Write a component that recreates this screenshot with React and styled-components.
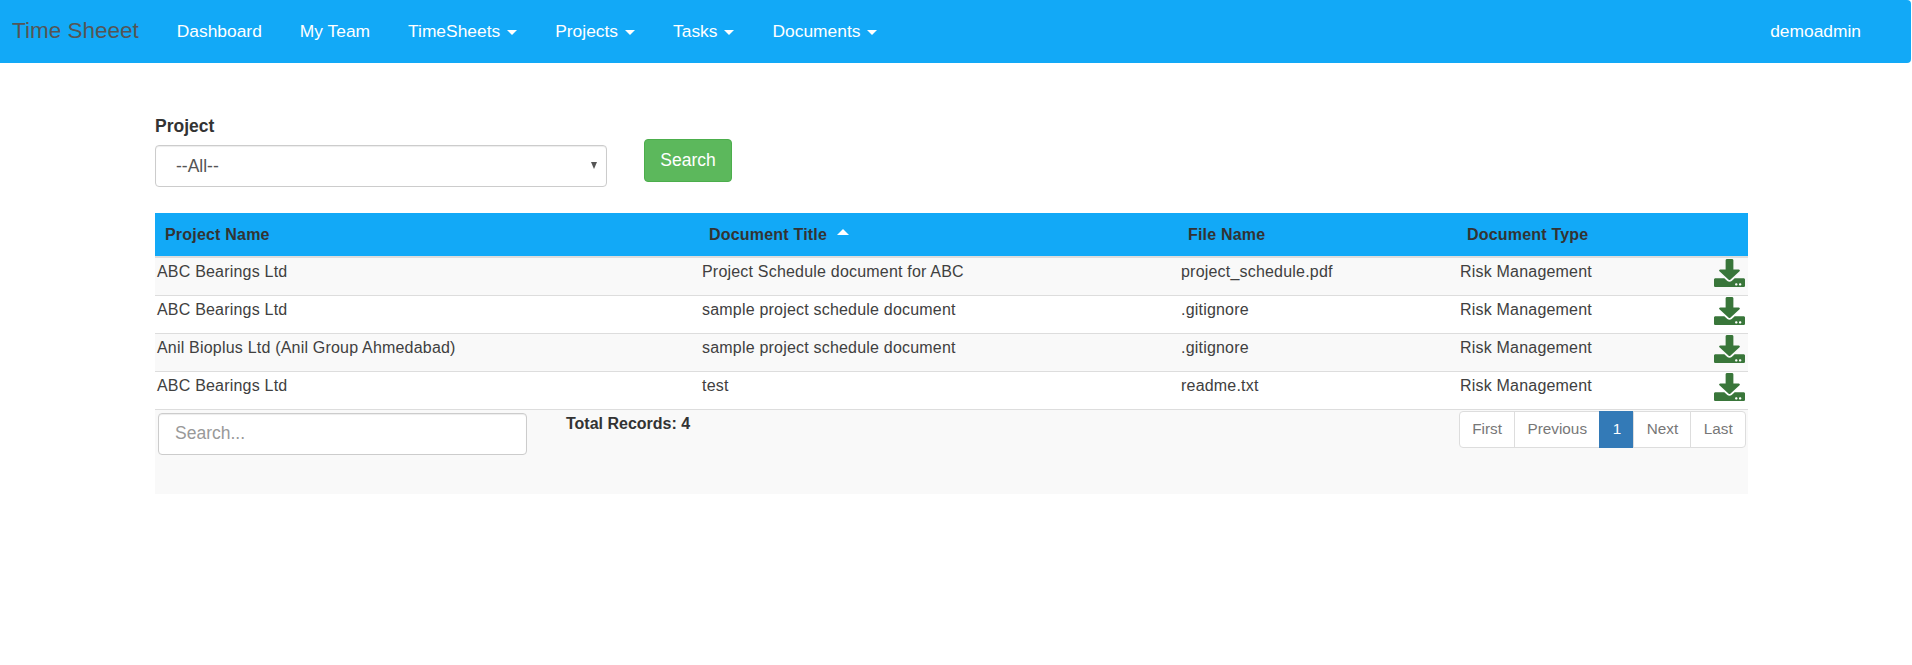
import React from 'react';
import styled, { createGlobalStyle } from 'styled-components';
import { FaDownload } from 'react-icons/fa';

const FONT = '"Liberation Sans", Arial, sans-serif';

/* ========== STYLES ========== */
const GlobalStyle = createGlobalStyle`
  * {
    box-sizing: border-box;
  }
  body {
    margin: 0;
    background: #fff;
    color: #333;
    font-family: ${FONT};
    font-size: 16px;
    line-height: 20px;
  }
`;

const Navbar = styled.nav`
  display: flex;
  align-items: center;
  height: 63px;
  margin-right: 1px;
  padding-bottom: 2px;
  background: #12a9f7;
  border-radius: 0 4px 4px 0;
`;

const Brand = styled.a`
  padding: 0 19px 0 12px;
  font-size: 22.5px;
  color: #555;
`;

const NavItem = styled.a`
  padding: 0 19px;
  font-size: 17.4px;
  color: #fff;
  display: flex;
  align-items: center;
`;

const Caret = styled.span`
  width: 0;
  height: 0;
  margin-left: 7px;
  margin-top: 3px;
  border-top: 5px solid #fff;
  border-left: 5px solid transparent;
  border-right: 5px solid transparent;
`;

const UserName = styled(NavItem)`
  margin-left: auto;
  padding: 0 50px 0 0;
`;

const Content = styled.main`
  padding: 52px 164px 0 155px;
`;

const FilterRow = styled.div`
  display: flex;
  align-items: flex-end;
  gap: 37px;
  margin-bottom: 26px;
`;

const Field = styled.div`
  width: 452px;
`;

const FieldLabel = styled.label`
  display: block;
  margin-bottom: 8px;
  font-size: 17.5px;
  font-weight: 700;
  line-height: 22px;
  color: #333;
`;

const SelectBox = styled.div`
  position: relative;
  height: 42px;
  padding: 0 20px;
  display: flex;
  align-items: center;
  background: #fff;
  border: 1px solid #ccc;
  border-radius: 4px;
  box-shadow: inset 0 1px 1px rgba(0, 0, 0, 0.075);
  font-size: 17.5px;
  color: #555;
`;

const SelectArrow = styled.span`
  position: absolute;
  right: 9px;
  top: 16px;
  width: 0;
  height: 0;
  border-top: 7px solid #555;
  border-left: 3px solid transparent;
  border-right: 3px solid transparent;
`;

const SearchButton = styled.button`
  height: 43px;
  width: 88px;
  margin-bottom: 5px;
  background: #5cb85c;
  border: 1px solid #4cae4c;
  border-radius: 4px;
  color: #fff;
  font-family: ${FONT};
  font-size: 17.5px;
`;

const Table = styled.table`
  width: 100%;
  table-layout: fixed;
  border-collapse: collapse;
`;

const HeadCell = styled.th`
  height: 44px;
  padding: 0 9px;
  background: #12a9f7;
  border-bottom: 2px solid #ddd;
  color: #333;
  font-size: 16px;
  letter-spacing: 0.2px;
  font-weight: 700;
  text-align: left;
  &:first-child {
    padding-left: 10px;
  }
`;

const SortMark = styled.span`
  display: inline-block;
  width: 0;
  height: 0;
  margin-left: 10px;
  vertical-align: 5px;
  border-bottom: 6px solid #fff;
  border-left: 6px solid transparent;
  border-right: 6px solid transparent;
`;

const Row = styled.tr`
  background: ${(props) => (props.$striped ? '#f9f9f9' : '#fff')};
`;

const Cell = styled.td`
  height: 38px;
  padding: 4px 2px 0;
  border-bottom: 1px solid #ddd;
  vertical-align: top;
  font-size: 16px;
  letter-spacing: 0.2px;
  line-height: 20px;
  color: #404040;
`;

const IconCell = styled(Cell)`
  padding: 1px 3px 0 0;
  text-align: right;
  color: #39763a;
  svg {
    display: inline-block;
    vertical-align: top;
  }
`;

const Footer = styled.div`
  display: flex;
  align-items: flex-start;
  height: 84px;
  padding: 3px 2px 0 3px;
  background: #f9f9f9;
`;

const SearchInput = styled.input`
  width: 369px;
  height: 42px;
  padding: 0 16px;
  background: #fff;
  border: 1px solid #ccc;
  border-radius: 4px;
  box-shadow: inset 0 1px 1px rgba(0, 0, 0, 0.075);
  font-family: ${FONT};
  font-size: 17.5px;
  color: #555;
  &::placeholder {
    color: #999;
  }
`;

const TotalRecords = styled.div`
  margin: 1px 0 0 39px;
  font-size: 16px;
  font-weight: 700;
  color: #333;
`;

const Pager = styled.div`
  display: flex;
  margin: -2px 0 0 auto;
`;

const PageLink = styled.a`
  height: 37px;
  padding: 0 12.3px;
  margin-left: -1px;
  display: flex;
  align-items: center;
  background: ${(props) => (props.$active ? '#337ab7' : '#fff')};
  border: 1px solid ${(props) => (props.$active ? '#337ab7' : '#ddd')};
  color: ${(props) => (props.$active ? '#fff' : '#777')};
  font-size: 15.3px;
  &:first-child {
    border-radius: 4px 0 0 4px;
  }
  &:last-child {
    border-radius: 0 4px 4px 0;
  }
`;

/* ========== DATA ========== */
const NAV_ITEMS = [
  { name: 'Dashboard' },
  { name: 'My Team' },
  { name: 'TimeSheets', menu: true },
  { name: 'Projects', menu: true },
  { name: 'Tasks', menu: true },
  { name: 'Documents', menu: true },
];

const DOCUMENTS = [
  ['ABC Bearings Ltd', 'Project Schedule document for ABC', 'project_schedule.pdf'],
  ['ABC Bearings Ltd', 'sample project schedule document', '.gitignore'],
  ['Anil Bioplus Ltd (Anil Group Ahmedabad)', 'sample project schedule document', '.gitignore'],
  ['ABC Bearings Ltd', 'test', 'readme.txt'],
];

const PAGES = ['First', 'Previous', '1', 'Next', 'Last'];

/* ========== COMPONENT ========== */
const App = () => (
  <>
    <GlobalStyle />
    <Navbar>
      <Brand>Time Sheeet</Brand>
      {NAV_ITEMS.map((item) => (
        <NavItem key={item.name}>
          {item.name}
          {item.menu && <Caret />}
        </NavItem>
      ))}
      <UserName>demoadmin</UserName>
    </Navbar>
    <Content>
      <FilterRow>
        <Field>
          <FieldLabel>Project</FieldLabel>
          <SelectBox>
            --All--
            <SelectArrow />
          </SelectBox>
        </Field>
        <SearchButton>Search</SearchButton>
      </FilterRow>
      <Table>
        <colgroup>
          <col style={{ width: 545 }} />
          <col style={{ width: 479 }} />
          <col style={{ width: 279 }} />
          <col style={{ width: 254 }} />
          <col />
        </colgroup>
        <thead>
          <tr>
            <HeadCell>Project Name</HeadCell>
            <HeadCell>
              Document Title
              <SortMark />
            </HeadCell>
            <HeadCell>File Name</HeadCell>
            <HeadCell>Document Type</HeadCell>
            <HeadCell />
          </tr>
        </thead>
        <tbody>
          {DOCUMENTS.map((doc, index) => (
            <Row key={index} $striped={index % 2 === 0}>
              <Cell>{doc[0]}</Cell>
              <Cell>{doc[1]}</Cell>
              <Cell>{doc[2]}</Cell>
              <Cell>Risk Management</Cell>
              <IconCell>
                <FaDownload size={31} style={{ height: 28 }} preserveAspectRatio="none" />
              </IconCell>
            </Row>
          ))}
        </tbody>
      </Table>
      <Footer>
        <SearchInput placeholder="Search..." />
        <TotalRecords>Total Records: 4</TotalRecords>
        <Pager>
          {PAGES.map((page) => (
            <PageLink key={page} $active={page === '1'}>
              {page}
            </PageLink>
          ))}
        </Pager>
      </Footer>
    </Content>
  </>
);

export default App;
